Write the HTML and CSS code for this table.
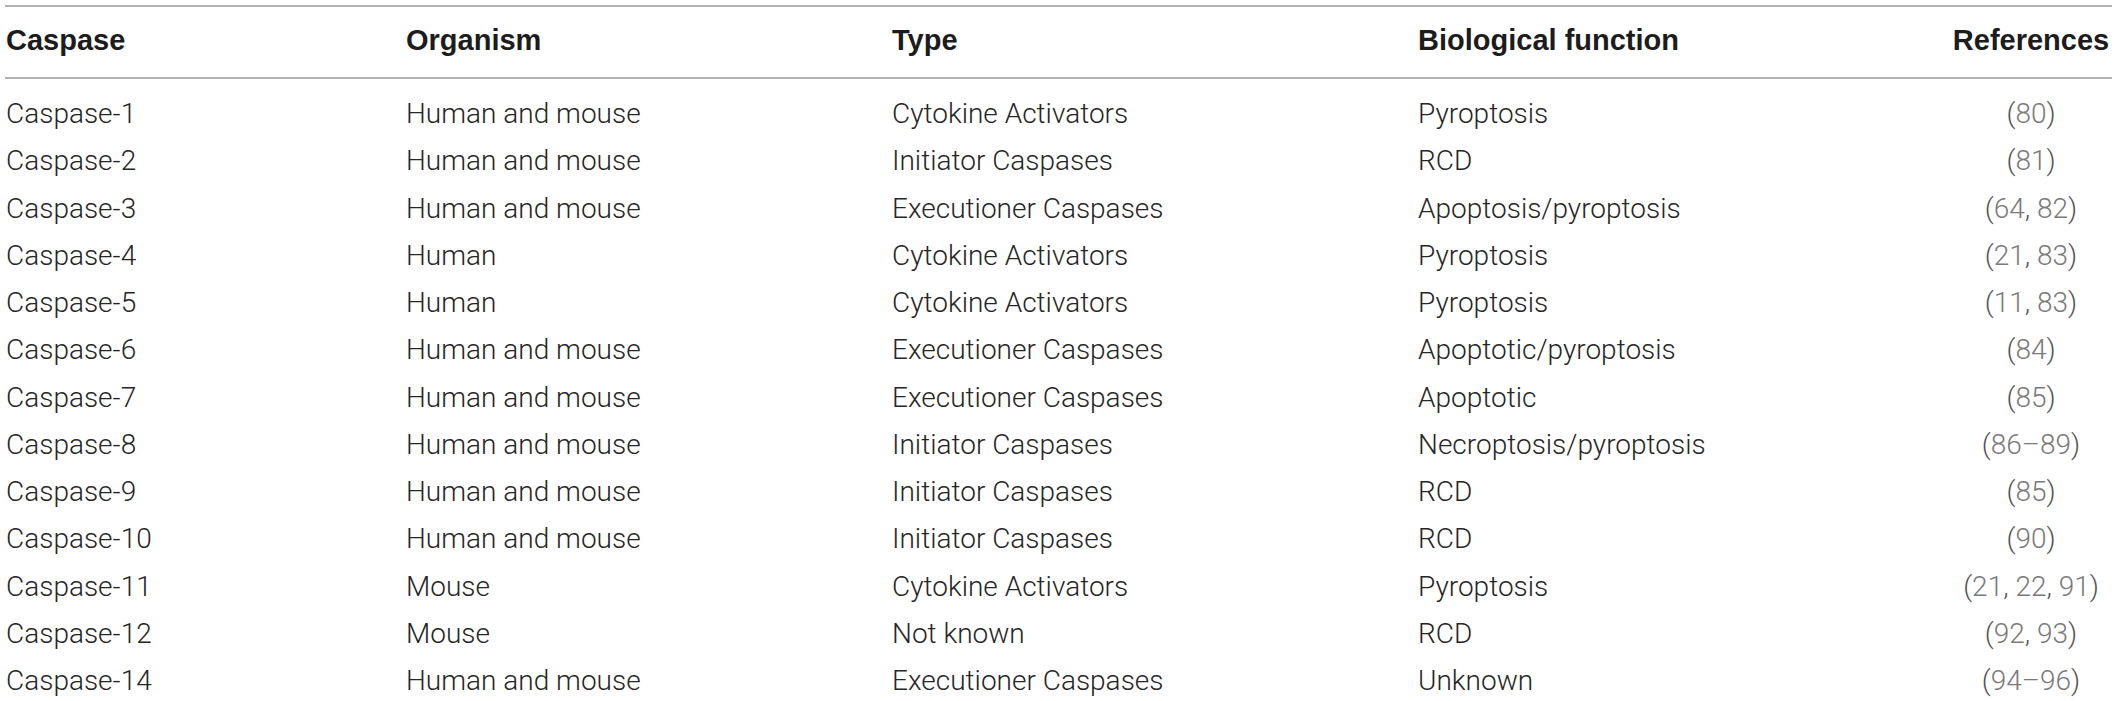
FILE: index.html
```html
<!DOCTYPE html>
<html lang="en">
<head>
<meta charset="utf-8">
<title>Caspases</title>
<link rel="stylesheet" href="styles.css">
</head>
<body>
<table class="caspase-table">
  <colgroup>
    <col class="c1"><col class="c2"><col class="c3"><col class="c4"><col class="c5">
  </colgroup>
  <thead>
    <tr>
      <th>Caspase</th>
      <th>Organism</th>
      <th>Type</th>
      <th>Biological function</th>
      <th class="refs">References</th>
    </tr>
  </thead>
  <tbody>
    <tr><td>Caspase-1</td><td>Human and mouse</td><td>Cytokine Activators</td><td>Pyroptosis</td><td class="refs">(<span class="ref">80</span>)</td></tr>
    <tr><td>Caspase-2</td><td>Human and mouse</td><td>Initiator Caspases</td><td>RCD</td><td class="refs">(<span class="ref">81</span>)</td></tr>
    <tr><td>Caspase-3</td><td>Human and mouse</td><td>Executioner Caspases</td><td>Apoptosis/pyroptosis</td><td class="refs">(<span class="ref">64</span>, <span class="ref">82</span>)</td></tr>
    <tr><td>Caspase-4</td><td>Human</td><td>Cytokine Activators</td><td>Pyroptosis</td><td class="refs">(<span class="ref">21</span>, <span class="ref">83</span>)</td></tr>
    <tr><td>Caspase-5</td><td>Human</td><td>Cytokine Activators</td><td>Pyroptosis</td><td class="refs">(<span class="ref">11</span>, <span class="ref">83</span>)</td></tr>
    <tr><td>Caspase-6</td><td>Human and mouse</td><td>Executioner Caspases</td><td>Apoptotic/pyroptosis</td><td class="refs">(<span class="ref">84</span>)</td></tr>
    <tr><td>Caspase-7</td><td>Human and mouse</td><td>Executioner Caspases</td><td>Apoptotic</td><td class="refs">(<span class="ref">85</span>)</td></tr>
    <tr><td>Caspase-8</td><td>Human and mouse</td><td>Initiator Caspases</td><td>Necroptosis/pyroptosis</td><td class="refs">(<span class="ref">86–89</span>)</td></tr>
    <tr><td>Caspase-9</td><td>Human and mouse</td><td>Initiator Caspases</td><td>RCD</td><td class="refs">(<span class="ref">85</span>)</td></tr>
    <tr><td>Caspase-10</td><td>Human and mouse</td><td>Initiator Caspases</td><td>RCD</td><td class="refs">(<span class="ref">90</span>)</td></tr>
    <tr><td>Caspase-11</td><td>Mouse</td><td>Cytokine Activators</td><td>Pyroptosis</td><td class="refs">(<span class="ref">21</span>, <span class="ref">22</span>, <span class="ref">91</span>)</td></tr>
    <tr><td>Caspase-12</td><td>Mouse</td><td>Not known</td><td>RCD</td><td class="refs">(<span class="ref">92</span>, <span class="ref">93</span>)</td></tr>
    <tr><td>Caspase-14</td><td>Human and mouse</td><td>Executioner Caspases</td><td>Unknown</td><td class="refs">(<span class="ref">94–96</span>)</td></tr>
  </tbody>
</table>
</body>
</html>
```

FILE: styles.css
```css
html, body {
  margin: 0;
  padding: 0;
  background: #ffffff;
}

.caspase-table {
  margin: 5px 5px 0 5px;
  width: 2107px;
  table-layout: fixed;
  border-collapse: separate;
  border-spacing: 0;
  font-family: Roboto, "Liberation Sans", Arial, sans-serif;
  color: #222222;
}

.c1 { width: 401px; }
.c2 { width: 486px; }
.c3 { width: 526px; }
.c4 { width: 532px; }
.c5 { width: 162px; }

.caspase-table th {
  font-family: "Liberation Sans", Arial, sans-serif;
  font-weight: 700;
  font-size: 29px;
  line-height: 32px;
  text-align: left;
  color: #1c1c1c;
  padding: 17px 0 21px 0;
  border-top: 2px solid #b2b2b2;
  border-bottom: 2px solid #b2b2b2;
  white-space: nowrap;
}

.caspase-table td {
  font-weight: 300;
  font-size: 28px;
  line-height: 47.25px;
  padding: 0;
  white-space: nowrap;
  color: #262626;
}

.caspase-table th:first-child,
.caspase-table td:first-child {
  padding-left: 1px;
}

.caspase-table tbody tr:first-child td {
  padding-top: 11px;
}

.caspase-table td.refs {
  text-align: center;
  color: #555555;
}

.caspase-table th.refs {
  text-align: center;
  color: #1c1c1c;
}

.ref {
  color: #7a7a7a;
}
```
